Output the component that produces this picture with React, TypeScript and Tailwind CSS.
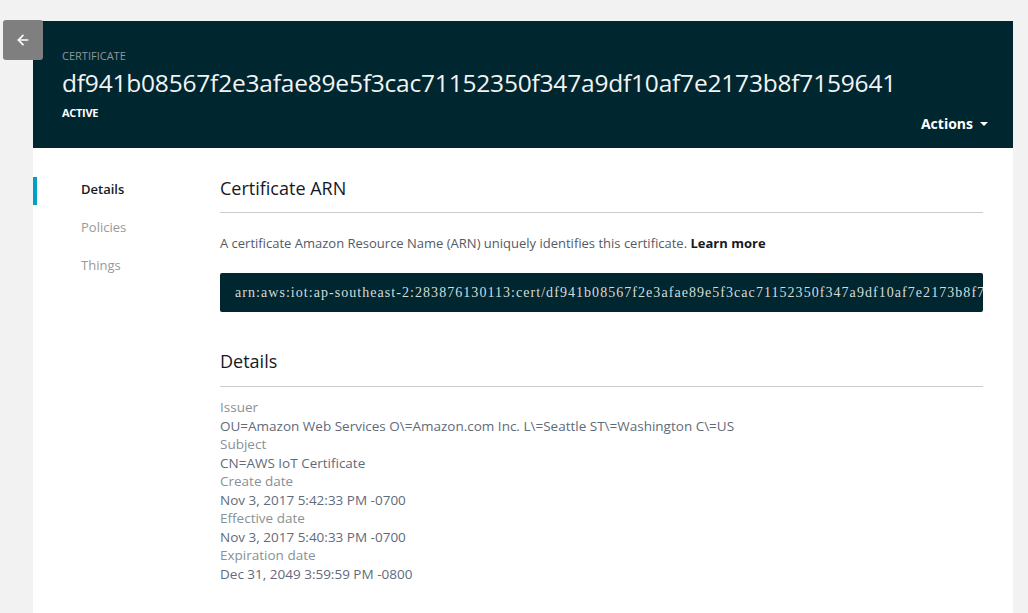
import { ArrowLeft } from "lucide-react";

const ARN =
  "arn:aws:iot:ap-southeast-2:283876130113:cert/df941b08567f2e3afae89e5f3cac71152350f347a9df10af7e2173b8f7159641";

const DETAILS = [
  ["Issuer", "OU=Amazon Web Services O\\=Amazon.com Inc. L\\=Seattle ST\\=Washington C\\=US"],
  ["Subject", "CN=AWS IoT Certificate"],
  ["Create date", "Nov 3, 2017 5:42:33 PM -0700"],
  ["Effective date", "Nov 3, 2017 5:40:33 PM -0700"],
  ["Expiration date", "Dec 31, 2049 3:59:59 PM -0800"],
];

const NAV = ["Details", "Policies", "Things"];

export default function App() {
  return (
    <div
      className="relative min-h-[613px] bg-[#f2f2f2] pt-[21px] pl-[33px] pr-[15px]"
      style={{ fontFamily: '"Open Sans", "Noto Sans", sans-serif' }}
    >
      <button
        type="button"
        className="absolute left-[3px] top-[20px] flex h-[40px] w-[40px] items-center justify-center rounded-[3px] bg-[#7f7f7f] text-white"
      >
        <ArrowLeft size={16} strokeWidth={2.5} />
      </button>

      <div className="min-h-[592px] bg-white">
        <header className="h-[127px] bg-[#00262f] pl-[29px] pr-[25px] pt-[28px]">
          <div className="text-[11px] leading-[14px] text-[#8f979b]">CERTIFICATE</div>
          <h1 className="mt-[4px] whitespace-nowrap text-[24.5px] leading-[32px] tracking-[-0.2px] text-[#f2f4f4]">
            df941b08567f2e3afae89e5f3cac71152350f347a9df10af7e2173b8f7159641
          </h1>
          <div className="mt-[7px] flex items-start justify-between">
            <div className="text-[11px] font-bold leading-[14px] tracking-[-0.3px] text-white">
              ACTIVE
            </div>
            <button
              type="button"
              className="mt-[8px] flex items-center gap-[7px] text-[14px] font-bold leading-[20px] text-white"
            >
              <span>Actions</span>
              <span className="h-0 w-0 border-x-[4px] border-t-[4px] border-x-transparent border-t-white" />
            </button>
          </div>
        </header>

        <div className="flex">
          <nav className="w-[187px] shrink-0 pt-[28px]">
            {NAV.map((n, i) => (
              <div key={n} className="relative h-[38px]">
                {i === 0 && (
                  <span className="absolute left-0 top-[1px] h-[28px] w-[4px] bg-[#00a1c9]" />
                )}
                <span
                  className={
                    i === 0
                      ? "absolute left-[48px] top-[4px] text-[13px] font-semibold text-[#16191f]"
                      : "absolute left-[48px] top-[4px] text-[13px] text-[#999]"
                  }
                >
                  {n}
                </span>
              </div>
            ))}
          </nav>

          <main className="w-[763px] pt-[28px]">
            <h2 className="border-b border-[#ccc] pb-[12px] text-[18px] leading-[24px] text-[#16191f]">
              Certificate ARN
            </h2>
            <p className="mt-[20px] text-[13px] leading-[20px] text-[#545b64]">
              A certificate Amazon Resource Name (ARN) uniquely identifies this certificate.{" "}
              <span className="font-bold text-[#16191f]">Learn more</span>
            </p>
            <div
              className="mt-[20px] flex h-[39px] items-center overflow-hidden whitespace-nowrap rounded-[2px] bg-[#00262f] pl-[15px] text-[14px] tracking-[1.05px] text-[#d5dbdb]"
              style={{ fontFamily: '"Liberation Serif", serif' }}
            >
              {ARN}
            </div>

            <h2 className="mt-[37px] border-b border-[#ccc] pb-[13px] text-[18px] leading-[24px] text-[#16191f]">
              Details
            </h2>
            <dl className="mt-[11px] text-[13.5px] leading-[18.5px]">
              {DETAILS.map(([k, v]) => (
                <div key={k}>
                  <dt className="text-[#879196]">{k}</dt>
                  <dd className="text-[#5f6b7a]">{v}</dd>
                </div>
              ))}
            </dl>
          </main>
        </div>
      </div>
    </div>
  );
}
